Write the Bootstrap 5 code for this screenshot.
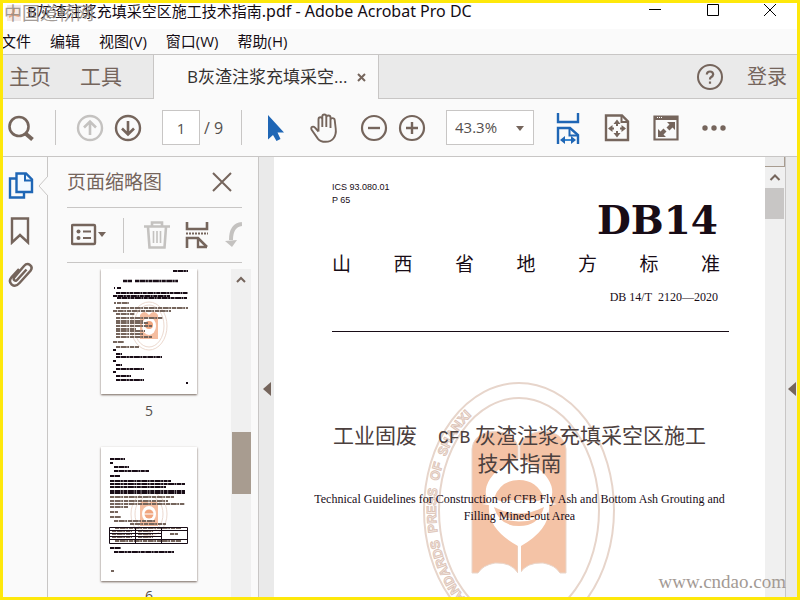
<!DOCTYPE html>
<html lang="zh-CN">
<head>
<meta charset="utf-8">
<meta name="viewport" content="width=device-width, initial-scale=1">
<title>B灰渣注浆充填采空区施工技术指南.pdf - Adobe Acrobat Pro DC</title>
<link href="https://cdn.jsdelivr.net/npm/bootstrap@5.3.0/dist/css/bootstrap.min.css" rel="stylesheet">
<style>
:root{--ink:#75655c;--line:#c8c6c5;--soft:#fafafa;--grey:#eaeaea;--blue:#1f66b5}
body{font-family:"Open Sans","Noto Sans CJK SC",sans-serif;color:#140c14;background:var(--soft);border:3px solid #fee80b;font-size:15px;line-height:20px}
button{border:0;background:none;padding:0;color:var(--ink);line-height:1}
svg{display:block;flex:none}
.ic{fill:none;stroke:currentColor;stroke-width:2}
.titlebar{height:26px;background:#fff;padding-left:24px}
.titlebar h1{font-size:15px;line-height:17px;font-family:"Noto Sans","Noto Sans CJK SC",sans-serif}
.titlebar h1 span{font-size:16px;line-height:1}
.titlebar button{width:58px;color:#140c14}
.titlebar button:last-child{width:55px}
.site-mark{top:0;left:1px;font-size:18px;line-height:21px;color:#938b86;opacity:.85}
.app-icon{top:2px;left:4px}
.menubar{height:25px;gap:19px;margin-left:-2px}
.menubar button{color:#140c14;font-size:15px;line-height:25px}
.tabs{height:45px;background:var(--grey);border-top:1px solid var(--line);color:var(--ink)}
.tabs .edge{border-bottom:1px solid var(--line)}
.tabs button{font-size:21px}
.home-tabs{width:150px;padding-left:6px;gap:29px}
.doc-tab{width:226px;background:var(--soft);border:solid var(--line);border-width:0 1px;padding-left:33px;gap:10px;font-size:17px;color:#33302f}
.account{padding-right:10px}
.tabs .sign{font-size:20px}
.toolbar{height:57px;border-bottom:1px solid var(--line);padding-left:4px;gap:20px;color:var(--ink);margin-bottom:0;box-sizing:content-box}
.vr-line{width:1px;height:35px;background:var(--line)}
.pair{gap:10px}
.page-box{width:38px;height:35px;border:1px solid var(--line);text-align:center;color:#55504e;background:#fff;padding:0;font-size:15px}
.page-total{width:41px;padding-left:4px;margin:0 -20px;color:#55504e;font-size:16px}
.zoom-box{width:88px;height:35px;border:1px solid var(--line);border-radius:0;padding:0 8px;color:#55504e;font-size:15px;background-color:#fff;
 --bs-form-select-bg-img:url("data:image/svg+xml,%3Csvg xmlns='http://www.w3.org/2000/svg' viewBox='0 0 10 10'%3E%3Cpath fill='%2375655c' d='M1 3h8L5 8z'/%3E%3C/svg%3E");background-size:10px 10px;background-position:right 8px center}
.active-tool{color:var(--blue)}
.faded{color:#c4c2c0}
.rail{width:45px;border-right:1px solid var(--line);padding:14px 9px 0 0;gap:16px}
.notch{right:-1px;top:19px}
.pages{width:211px;padding:0 16px 0 19px;border-right:1px solid var(--line)}
.pages h2{font-size:19px;line-height:24px;color:var(--ink)}
.pages-head{height:51px;border-bottom:1px solid var(--line);padding-right:10px}
.pages-tools{height:55px;border-bottom:1px solid var(--line);overflow:hidden}
.thumbs{margin:6px -9px 0 0}
.thumb{background:#fff;box-shadow:0 1px 2px #75655c}
.thumb-no{font-size:14px;line-height:18px;color:#55504e;margin:8px 0 27px}
.thumb-no.next{margin-top:6px}
.track{width:20px;background:#f0f0f0}
.thumb-bar{height:62px;background:#a89c90;margin-top:145px;width:19px}
.gutter{width:15px;background:var(--grey);padding-top:223px}
.gutter-right{width:12px;border-left:1px solid var(--line)}
.doc-scroll .ruler{height:10px;background:var(--grey);border:solid #a89c90;border-width:0 1px 1px 0}
.doc-scroll .knob{width:19px;height:31px;background:#c8c6c5;margin-top:5px}
.paper{background:#fff;color:#180c16;isolation:isolate}
.seal{left:50%;top:222px;margin-left:-99px;z-index:-1}
.paper-top{padding:24px 36px 0 58px}
.codes{font:9px/13px "Liberation Sans",sans-serif}
.big-code{font:bold 39px/44px "DejaVu Serif",serif;padding-right:11px;margin-top:-9px}
.province{font-size:19px;line-height:24px;padding-right:9px;margin-top:9px;font-family:"Noto Sans CJK SC",sans-serif}
.std-no{font:12px/16px "Liberation Serif",serif;padding-right:11px;margin-top:14px;padding-bottom:26px;border-bottom:1px solid #180c16}
.paper-title{font-family:"Noto Sans CJK SC",sans-serif;font-size:21px;line-height:28px;margin-top:88px;color:#4c403e}
.paper-title .latin{font-family:"Liberation Mono",monospace;font-size:18px;line-height:1}
.paper-en{font:12px/17px "Liberation Serif",serif;margin-top:15px}
.web-mark{right:11px;bottom:2px;font:19px/26px "Liberation Serif",serif;color:#a39a94}
</style>
<script src="https://cdn.jsdelivr.net/npm/bootstrap@5.3.0/dist/js/bootstrap.bundle.min.js"></script>
</head>
<body class="vh-100 d-flex flex-column overflow-hidden position-relative">
<header class="titlebar d-flex align-items-start flex-shrink-0">
  <svg class="app-icon position-absolute" width="14" height="16" viewBox="0 0 14 16"><rect width="14" height="16" fill="#f4e9e6"/><path d="M2 12Q8 10 7 3M4 9l8 2" fill="none" stroke="#eba77f" stroke-width="2"/></svg>
  <h1 class="m-0 fw-normal text-nowrap me-auto">B灰渣注浆充填采空区施工技术指南<span>.pdf - Adobe Acrobat Pro DC</span></h1>
  <button aria-label="最小化" class="d-flex justify-content-center"><svg width="14" height="14" viewBox="0 0 14 14"><path d="M1 6.500h12" stroke="#000"/></svg></button>
  <button aria-label="最大化" class="d-flex justify-content-center"><svg width="14" height="14" viewBox="0 0 14 14"><path d="M1.500 1.500h11v11h-11z" fill="none" stroke="#000"/></svg></button>
  <button aria-label="关闭" class="d-flex justify-content-center"><svg width="14" height="14" viewBox="0 0 14 14"><path d="M1 1l12 12M13 1L1 13" stroke="#000"/></svg></button>
</header>
<div class="site-mark position-absolute text-nowrap">中国道桥网</div>
<nav class="menubar d-flex flex-shrink-0" aria-label="菜单">
  <button>文件</button><button>编辑</button><button>视图(V)</button><button>窗口(W)</button><button>帮助(H)</button>
</nav>
<div class="tabs d-flex flex-shrink-0">
  <div class="home-tabs edge d-flex align-items-center"><button>主页</button><button>工具</button></div>
  <div class="doc-tab d-flex align-items-center text-nowrap"><span>B灰渣注浆充填采空...</span>
    <button aria-label="关闭标签"><svg width="9" height="9" viewBox="0 0 9 9" class="ic"><path d="M1 1l7 7M8 1L1 8"/></svg></button></div>
  <div class="account edge flex-grow-1 d-flex align-items-center justify-content-end gap-4">
    <button aria-label="帮助"><svg width="26" height="26" viewBox="0 0 26 26" class="ic"><circle cx="13" cy="13" r="12"/><path d="M9.800 10.500Q10 7.500 13 7.500t3.200 2.800Q16 12 14 13.200q-1 .8-1 2.300M13 17.500v2.300" stroke-width="2.200"/></svg></button>
    <button class="sign">登录</button>
  </div>
</div>
<div class="toolbar d-flex align-items-center flex-shrink-0" role="toolbar" aria-label="工具栏">
  <button aria-label="查找"><svg width="28" height="28" viewBox="0 0 28 28" class="ic"><circle cx="12" cy="12.500" r="9.500" stroke-width="2.600"/><path d="M18.500 19.500l7 6" stroke-width="4"/></svg></button>
  <span class="vr-line"></span>
  <div class="pair d-flex">
    <button class="faded" aria-label="上一页"><svg width="28" height="28" viewBox="0 0 28 28" class="ic"><circle cx="14" cy="14" r="12" stroke-width="2.400"/><path d="M14 21V8M8 13.500l6-6 6 6" stroke-width="2.600"/></svg></button>
    <button aria-label="下一页"><svg width="28" height="28" viewBox="0 0 28 28" class="ic"><circle cx="14" cy="14" r="12" stroke-width="2.400"/><path d="M14 7v13M8 14.500l6 6 6-6" stroke-width="2.600"/></svg></button>
  </div>
  <input class="page-box" id="pageNo" value="1" aria-label="页码">
  <label class="page-total" for="pageNo">/ 9</label>
  <span class="vr-line"></span>
  <button class="active-tool" aria-label="选择"><svg width="28" height="28" viewBox="0 0 28 28"><path d="M6 1v24.500l5-4.500 3.500 6 4-2-3-6.500H22z" fill="currentColor"/></svg></button>
  <button aria-label="手形"><svg width="30" height="30" viewBox="0 0 30 30" class="ic"><path d="M8.500 18.500V6.500q0-2.300 1.900-2.300t1.900 2.300V14M12.300 12V3.500q0-2 2-2t2 2V14M16.300 12V4.500q0-2 2.100-2t2.100 2V15M20.500 14V7q0-1.900 1.900-1.900 2.100 0 2.300 1.900l1 8.500q.8 6-2.300 10-2.400 3.300-7.900 3.300-5 0-7.500-3L1.800 17q-1.300-2.300.4-3.200 1.400-.6 2.800.9l3.500 3.800" stroke-width="1.900"/></svg></button>
  <div class="pair d-flex">
    <button aria-label="缩小"><svg width="28" height="28" viewBox="0 0 28 28" class="ic"><circle cx="14" cy="14" r="12" stroke-width="2.200"/><path d="M8 14h12" stroke-width="2.400"/></svg></button>
    <button aria-label="放大"><svg width="28" height="28" viewBox="0 0 28 28" class="ic"><circle cx="14" cy="14" r="12" stroke-width="2.200"/><path d="M8 14h12M14 8v12" stroke-width="2.400"/></svg></button>
  </div>
  <select class="form-select zoom-box" aria-label="缩放"><option>43.3%</option></select>
  <button class="active-tool" aria-label="适合宽度"><svg width="28" height="32" viewBox="0 0 28 32" class="ic"><path d="M4 1v9h20V1M4 32V16h12l8 7v9" stroke-width="2.400"/><path d="M15.500 16v7.500H24" stroke-width="2"/><path d="M9 28h10" stroke="#3b87cf"/><path d="M11 24v8l-5-4zM17 24v8l5-4z" fill="currentColor" stroke="none"/></svg></button>
  <button aria-label="适合页面"><svg width="30" height="28" viewBox="0 0 30 28" class="ic"><path d="M4 1.500h16l6 6V26H4z" stroke-width="2.400"/><path d="M19.500 2v6H26"/><path d="M15 8v4M15 17v4M8 14.500h4M18 14.500h4" /><path d="M11.500 10h7L15 5.500zM11.500 19h7L15 23.500zM10.500 11v7L6 14.500zM19.500 11v7l4.500-3.500z" fill="currentColor" stroke="none"/></svg></button>
  <button aria-label="全屏"><svg width="28" height="28" viewBox="0 0 28 28" class="ic"><path d="M2.500 2.500h23v23h-23z" stroke-width="2.200"/><path d="M2 4.500h24" stroke-width="3"/><path d="M5 3.500h6" stroke="#fff" stroke-width="1" stroke-dasharray="1 1"/><path d="M23 8v8l-2.500-2.500-3 3-3-3 3-3L15 8zM6 23v-8l2.500 2.500 3-3 3 3-3 3L14 23z" fill="currentColor" stroke="none"/></svg></button>
  <button aria-label="更多"><svg width="28" height="28" viewBox="0 0 28 28" fill="currentColor"><circle cx="5" cy="14" r="2.700"/><circle cx="14" cy="14" r="2.700"/><circle cx="23" cy="14" r="2.700"/></svg></button>
</div>
<main class="d-flex flex-grow-1 overflow-hidden">
  <nav class="rail d-flex flex-column align-items-center flex-shrink-0 position-relative" aria-label="导览">
    <button class="active-tool" aria-label="页面缩略图"><svg width="26" height="30" viewBox="0 0 26 30" class="ic"><path d="M8 7.500H2v19h14v-5" stroke-width="2.400"/><path d="M8.500 2.500H18l6 6V21H8.500z" fill="#f3f9ff" stroke-width="2.400"/><path d="M17 3v6.500h7"/></svg></button>
    <button aria-label="书签"><svg width="24" height="28" viewBox="0 0 24 28" class="ic"><path d="M3 1.500h16v24L11 18l-8 7.500z" stroke-width="2.400"/></svg></button>
    <button aria-label="附件"><svg width="26" height="28" viewBox="0 0 26 28" class="ic"><path d="M18.500 8.500l-9 10q-1.500 2-3 .8-1.500-1.300 0-3.200L16 5q3-3.300 6-1t.5 5.800L11.500 22q-4 4.500-7.800 1.500-3.500-3-.2-7.300L11 8" stroke-width="2.500"/></svg></button>
    <svg class="notch position-absolute" width="10" height="20" viewBox="0 0 10 20"><path d="M10 0L1 10l9 10" fill="#fafafa" stroke="#c8c6c5"/></svg>
  </nav>
  <section class="pages d-flex flex-column flex-shrink-0 overflow-hidden">
    <div class="pages-head d-flex align-items-center justify-content-between flex-shrink-0"><h2 class="m-0 fw-normal">页面缩略图</h2>
      <button aria-label="关闭面板"><svg width="20" height="20" viewBox="0 0 20 20" class="ic"><path d="M1 1l18 18M19 1L1 19"/></svg></button></div>
    <div class="pages-tools d-flex align-items-center flex-shrink-0 justify-content-between ps-1">
      <button aria-label="选项"><svg width="36" height="24" viewBox="0 0 36 24" class="ic"><rect x="1" y="2" width="23" height="19" rx="1" stroke-width="2.400"/><path d="M12 8.500h8M12 15h8"/><path d="M27 9h8l-4 5z" fill="currentColor" stroke="none"/><circle cx="7.500" cy="8.500" r="2" fill="currentColor" stroke="none"/><circle cx="7.500" cy="15" r="2" fill="currentColor" stroke="none"/></svg></button>
      <span class="vr-line"></span>
      <button class="faded ms-1" aria-label="删除"><svg width="26" height="28" viewBox="0 0 26 28" class="ic"><path d="M0 5.500h26M8 5V1.500h10V5M4 6l1.500 20.500h15L22 6" stroke-width="2.600"/><path d="M9.500 10v12M13 10v12M16.500 10v12" stroke-width="1.600"/></svg></button>
      <button aria-label="插入页面"><svg width="24" height="28" viewBox="0 0 24 28" class="ic"><path d="M2 1v7h20V1M2 27V17h11l9 9" stroke-width="2.600"/><path d="M1 12.500h22" stroke-dasharray="2 1"/><path d="M13 17v9h9" stroke-width="2.400"/></svg></button>
      <button class="faded" aria-label="旋转"><svg width="17" height="28" viewBox="0 0 17 28" class="ic"><path d="M17 3Q6 4 6 19" stroke-width="4"/><path d="M0 20l12-1-5 7z" fill="currentColor" stroke="none"/></svg></button>
    </div>
    <div class="thumbs d-flex flex-grow-1 overflow-hidden">
      <div class="flex-grow-1 d-flex flex-column align-items-center">
        <svg class="thumb" width="96" height="125" viewBox="0 0 96 125">
          <g fill="none" stroke="#ecd9cf"><ellipse cx="48" cy="57" rx="18" ry="24"/><ellipse cx="48" cy="57" rx="15" ry="21"/></g>
          <path d="M39 46q4-6 9 0 5-6 9 0v24H39z" fill="#f5bd9f"/><ellipse cx="48" cy="57" rx="7" ry="9" fill="#fff"/><circle cx="48" cy="56" r="4" fill="#f0a57e"/>
          <g stroke="#180c16" stroke-width="2" fill="none" stroke-dasharray="4 .5 6 .4 2 .5">
            <path d="M72 2h15"/><path d="M22 12h9M34 12h43" stroke-width="2.600"/><path d="M13 19h1M16 19h4M15 24h72M12 27h57M16 29h70" stroke-width="2"/><path d="M12 62h0M12 81h3M15 85h6M15 88h46M12 92h3M15 96h6M15 100h28M12 103h3M15 107h15M15 111h28M85 114h2"/></g>
          <g stroke="#75655c" stroke-width="1.800" fill="none" stroke-dasharray="4 .7 6 .5 2 .8"><path d="M13 34h2M16 34h12M15 39h72M12 42h58M15 45h19M15 49h47M15 52h27M15 54h32M15 57h36M15 60h20M15 62h29M15 65h27M15 68h36M12 73h11M15 78h23"/></g>
        </svg>
        <div class="thumb-no">5</div>
        <svg class="thumb" width="96" height="134" viewBox="0 0 96 134">
          <g fill="none" stroke="#ecd9cf"><ellipse cx="48" cy="67" rx="18" ry="22"/><ellipse cx="48" cy="67" rx="14" ry="18"/></g>
          <path d="M39 56q4-5 9 0 5-5 9 0v23H39z" fill="#f5bd9f"/><ellipse cx="48" cy="67" rx="7" ry="8" fill="#fff"/><circle cx="48" cy="67" r="4.500" fill="#f0a57e"/><path d="M42 67h12" stroke="#fff"/>
          <g stroke="#180c16" stroke-width="2" fill="none" stroke-dasharray="4 .5 6 .4 2 .5"><path d="M9 12h15M9 16h3M13 20h15M13 24h35M9 29h10M9 34h61M9 37h75M9 40h56M9 44h75M9 46h75M9 101h11M13 105h60"/></g>
          <g stroke="#75655c" stroke-width="1.800" fill="none" stroke-dasharray="4 .7 6 .5 2 .8"><path d="M9 50h64M9 54h58M9 57h75M9 60h18M9 65h8M9 70h11M13 74h41M29 77h36M14 81h66M11 84h20M37 84h15M11 87h20M37 87h15M11 90h20M37 90h15M69 87h8M14 94h66M10 124h3"/></g>
          <path d="M8.500 80.500h78v16h-78zM8 83.500h78M8 86.500h52M8 89.500h52M8 92.500h78M34.500 80v17M60.500 80v17" fill="none" stroke="#180c16"/>
        </svg>
        <div class="thumb-no next">6</div>
      </div>
      <div class="track d-flex flex-column align-items-center">
        <button aria-label="向上滚动" class="pt-1"><svg width="12" height="14" viewBox="0 0 12 14" class="ic"><path d="M2 9l4-4 4 4"/></svg></button>
        <div class="thumb-bar"></div>
      </div>
    </div>
  </section>
  <div class="gutter flex-shrink-0"><button aria-label="收起面板" class="ps-1"><svg width="8" height="14" viewBox="0 0 8 14"><path d="M8 0v14L0 7z" fill="currentColor"/></svg></button></div>
  <article class="paper flex-grow-1 position-relative overflow-hidden">
    <svg class="seal position-absolute" width="196" height="256" viewBox="0 0 196 256">
      <defs><path id="ring" d="M98 246A83 115 0 0 1 98 16"/></defs>
      <g fill="none" stroke="#e7d5cb" stroke-width="2"><ellipse cx="98" cy="131" rx="95" ry="127"/><ellipse cx="98" cy="131" rx="80" ry="112"/></g>
      <text font-family="Liberation Sans,sans-serif" font-size="13" font-weight="bold" fill="#f6ece6" stroke="#dcc3b6" stroke-width=".9"><textPath href="#ring" startOffset="46">STANDARDS&#160; PRESS&#160; OF&#160; SHANXI</textPath></text>
      <path d="M51 70Q52 57 67 53Q91 50 97 67V194Q90 183 74 184 62 186 57 194H51zM145 70Q144 57 129 53 105 50 99 67V194Q106 183 122 184 134 186 139 194H145z" fill="#f4c3a6" stroke="#e9d6cb"/>
      <path d="M97 80Q76 88 69 100 61 112 68 126 66 150 97 167V194h3V167Q130 150 128 126 135 112 127 100 120 88 99 80z" fill="#fff"/>
      <path d="M73 119Q80 101 98 101t25 18Q112 126 98 125 84 126 73 119z" fill="#f4c3a6"/>
      <path d="M73 128Q98 141 123 128 118 147 98 147T73 128z" fill="#f4c3a6"/>
      <path d="M61 125Q98 117 136 125 98 133 61 125z" fill="#fff"/><path d="M79 138Q98 145 117 138" fill="none" stroke="#fff" stroke-width="2"/>
    </svg>
    <div class="paper-top">
      <div class="codes">ICS 93.080.01<br>P 65</div>
      <div class="big-code text-end">DB14</div>
      <div class="province d-flex justify-content-between"><span>山</span><span>西</span><span>省</span><span>地</span><span>方</span><span>标</span><span>准</span></div>
      <div class="std-no text-end">DB 14/T&nbsp; 2120—2020</div>
    </div>
    <h2 class="paper-title text-center mb-0 fw-normal text-nowrap">工业固废　<span class="latin">CFB</span> 灰渣注浆充填采空区施工<br>技术指南</h2>
    <p class="paper-en text-center mb-0">Technical Guidelines for Construction of CFB Fly Ash and Bottom Ash Grouting and<br>Filling Mined-out Area</p>
  </article>
  <div class="track doc-scroll flex-shrink-0">
    <div class="ruler"></div>
    <button aria-label="向上滚动" class="d-block pt-1 ps-1"><svg width="12" height="12" viewBox="0 0 12 12" class="ic"><path d="M1.500 9L6 4.500 10.500 9"/></svg></button>
    <div class="knob"></div>
  </div>
  <div class="gutter gutter-right flex-shrink-0"><button aria-label="展开工具"><svg width="11" height="14" viewBox="0 0 11 14"><path d="M10 0v14L2 7z" fill="currentColor"/></svg></button></div>
</main>
<div class="web-mark position-absolute">www.cndao.com</div>
</body>
</html>
